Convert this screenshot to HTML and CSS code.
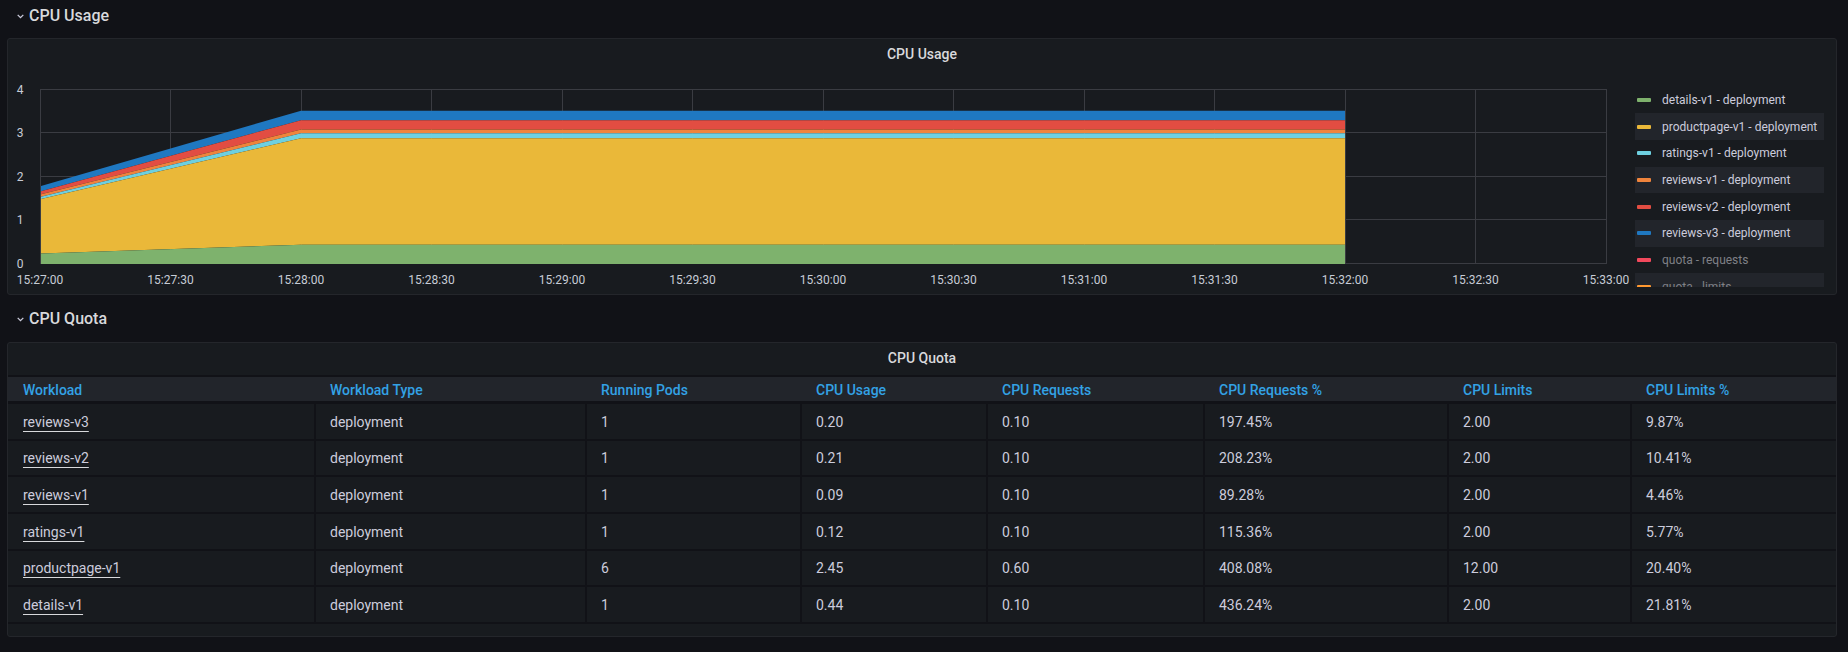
FILE: index.html
```html
<!DOCTYPE html>
<html>
<head>
<meta charset="utf-8">
<link rel="stylesheet" href="styles.css">
</head>
<body>
<div class="dash">
  <div class="row-title">
    <svg class="chev" width="7" height="5" viewBox="0 0 7 5"><path d="M0.7 0.9 L3.5 3.7 L6.3 0.9" fill="none" stroke="#ccccdc" stroke-width="1.3"/></svg>
    <span>CPU Usage</span>
  </div>

  <section class="panel panel-graph">
    <div class="panel-title">CPU Usage</div>
    <div class="graph-body">
      <svg class="plot" width="1622" height="223" viewBox="8 71 1622 223">
        <g class="grid" stroke="#3a3c42" stroke-width="1" fill="none">
          <line x1="40" y1="89.5" x2="1606.5" y2="89.5"/>
          <line x1="40" y1="132.5" x2="1606.5" y2="132.5"/>
          <line x1="40" y1="176.5" x2="1606.5" y2="176.5"/>
          <line x1="40" y1="219.5" x2="1606.5" y2="219.5"/>
          <line x1="40" y1="263.5" x2="1606.5" y2="263.5"/>
          <line x1="40.5" y1="89" x2="40.5" y2="264"/>
          <line x1="170.5" y1="89" x2="170.5" y2="264"/>
          <line x1="301.5" y1="89" x2="301.5" y2="264"/>
          <line x1="431.5" y1="89" x2="431.5" y2="264"/>
          <line x1="562.5" y1="89" x2="562.5" y2="264"/>
          <line x1="692.5" y1="89" x2="692.5" y2="264"/>
          <line x1="823.5" y1="89" x2="823.5" y2="264"/>
          <line x1="953.5" y1="89" x2="953.5" y2="264"/>
          <line x1="1084.5" y1="89" x2="1084.5" y2="264"/>
          <line x1="1214.5" y1="89" x2="1214.5" y2="264"/>
          <line x1="1345.5" y1="89" x2="1345.5" y2="264"/>
          <line x1="1475.5" y1="89" x2="1475.5" y2="264"/>
          <line x1="1606.5" y1="89" x2="1606.5" y2="264"/>
        </g>
        <g class="areas">
          <polygon fill="#1f78c1" points="41,186 301,110.7 1345,110.7 1345,120.3 301,120.3 41,191.2"/>
          <polygon fill="#e24d42" points="41,191.2 301,120.3 1345,120.3 1345,129.5 301,129.5 41,194.3"/>
          <polygon fill="#ef843c" points="41,194.3 301,129.5 1345,129.5 1345,133.3 301,133.3 41,196.8"/>
          <polygon fill="#6ed0e0" points="41,196.8 301,133.3 1345,133.3 1345,138.3 301,138.3 41,199.1"/>
          <polygon fill="#eab839" points="41,199.1 301,138.3 1345,138.3 1345,244.7 301,244.7 41,253.4"/>
          <polygon fill="#7eb26d" points="41,253.4 301,244.7 1345,244.7 1345,264 41,264"/>
        </g>
        <g class="ylab" text-anchor="end">
          <text x="23.5" y="93.5">4</text>
          <text x="23.5" y="137">3</text>
          <text x="23.5" y="180.5">2</text>
          <text x="23.5" y="224">1</text>
          <text x="23.5" y="267.5">0</text>
        </g>
        <g class="xlab" text-anchor="middle">
          <text x="40" y="283.5">15:27:00</text>
          <text x="170.5" y="283.5">15:27:30</text>
          <text x="301" y="283.5">15:28:00</text>
          <text x="431.5" y="283.5">15:28:30</text>
          <text x="562" y="283.5">15:29:00</text>
          <text x="692.5" y="283.5">15:29:30</text>
          <text x="823" y="283.5">15:30:00</text>
          <text x="953.5" y="283.5">15:30:30</text>
          <text x="1084" y="283.5">15:31:00</text>
          <text x="1214.5" y="283.5">15:31:30</text>
          <text x="1345" y="283.5">15:32:00</text>
          <text x="1475.5" y="283.5">15:32:30</text>
          <text x="1606" y="283.5">15:33:00</text>
        </g>
      </svg>
      <div class="legend">
        <div class="legend-item"><i class="sw c-green"></i><span>details-v1 - deployment</span></div>
        <div class="legend-item alt"><i class="sw c-yellow"></i><span>productpage-v1 - deployment</span></div>
        <div class="legend-item"><i class="sw c-cyan"></i><span>ratings-v1 - deployment</span></div>
        <div class="legend-item alt"><i class="sw c-orange"></i><span>reviews-v1 - deployment</span></div>
        <div class="legend-item"><i class="sw c-red"></i><span>reviews-v2 - deployment</span></div>
        <div class="legend-item alt"><i class="sw c-blue"></i><span>reviews-v3 - deployment</span></div>
        <div class="legend-item hidden"><i class="sw c-qreq"></i><span>quota - requests</span></div>
        <div class="legend-item alt hidden"><i class="sw c-qlim"></i><span>quota - limits</span></div>
      </div>
    </div>
  </section>

  <div class="row-title row-title-2">
    <svg class="chev" width="7" height="5" viewBox="0 0 7 5"><path d="M0.7 0.9 L3.5 3.7 L6.3 0.9" fill="none" stroke="#ccccdc" stroke-width="1.3"/></svg>
    <span>CPU Quota</span>
  </div>

  <section class="panel panel-table">
    <div class="panel-title">CPU Quota</div>
    <div class="table">
      <div class="thead">
        <div class="th">Workload</div>
        <div class="th">Workload Type</div>
        <div class="th">Running Pods</div>
        <div class="th">CPU Usage</div>
        <div class="th">CPU Requests</div>
        <div class="th">CPU Requests %</div>
        <div class="th">CPU Limits</div>
        <div class="th">CPU Limits %</div>
      </div>
      <div class="tr">
        <div class="td"><a class="link">reviews-v3</a></div><div class="td">deployment</div><div class="td">1</div><div class="td">0.20</div><div class="td">0.10</div><div class="td">197.45%</div><div class="td">2.00</div><div class="td">9.87%</div>
      </div>
      <div class="tr">
        <div class="td"><a class="link">reviews-v2</a></div><div class="td">deployment</div><div class="td">1</div><div class="td">0.21</div><div class="td">0.10</div><div class="td">208.23%</div><div class="td">2.00</div><div class="td">10.41%</div>
      </div>
      <div class="tr">
        <div class="td"><a class="link">reviews-v1</a></div><div class="td">deployment</div><div class="td">1</div><div class="td">0.09</div><div class="td">0.10</div><div class="td">89.28%</div><div class="td">2.00</div><div class="td">4.46%</div>
      </div>
      <div class="tr">
        <div class="td"><a class="link">ratings-v1</a></div><div class="td">deployment</div><div class="td">1</div><div class="td">0.12</div><div class="td">0.10</div><div class="td">115.36%</div><div class="td">2.00</div><div class="td">5.77%</div>
      </div>
      <div class="tr">
        <div class="td"><a class="link">productpage-v1</a></div><div class="td">deployment</div><div class="td">6</div><div class="td">2.45</div><div class="td">0.60</div><div class="td">408.08%</div><div class="td">12.00</div><div class="td">20.40%</div>
      </div>
      <div class="tr">
        <div class="td"><a class="link">details-v1</a></div><div class="td">deployment</div><div class="td">1</div><div class="td">0.44</div><div class="td">0.10</div><div class="td">436.24%</div><div class="td">2.00</div><div class="td">21.81%</div>
      </div>
    </div>
  </section>
</div>
</body>
</html>
```

FILE: styles.css
```css
* { box-sizing: border-box; }

html, body {
  margin: 0;
  padding: 0;
  background: #111217;
  color: #ccccdc;
  font-family: Roboto, "Liberation Sans", sans-serif;
  overflow: hidden;
}

.dash {
  width: 1848px;
  height: 652px;
  padding-left: 7px;
}

.row-title {
  height: 30px;
  margin-bottom: 8px;
  display: flex;
  align-items: center;
  padding-left: 10px;
  font-size: 16px;
  font-weight: 500;
  color: #d8d9dc;
}

.row-title .chev {
  margin-right: 5px;
  margin-top: 2px;
}

.row-title-2 {
  height: 31px;
  margin-bottom: 8px;
}

.panel {
  width: 1830px;
  background: #181b1f;
  border: 1px solid #24262b;
  border-radius: 3px;
}

.panel-graph {
  height: 257px;
  margin-bottom: 8px;
}

.panel-title {
  height: 32px;
  line-height: 31px;
  text-align: center;
  font-size: 14px;
  font-weight: 500;
  color: #d8d9dc;
}

.graph-body {
  display: flex;
  height: 223px;
}

.plot {
  display: block;
  flex: none;
}

.plot text {
  font-family: Roboto, "Liberation Sans", sans-serif;
  font-size: 12px;
  fill: #c7ccd6;
}

.legend {
  margin-left: 5px;
  margin-top: 15.67px;
  width: 189px;
  height: 200px;
  overflow: hidden;
  font-size: 12px;
}

.legend-item {
  height: 26.667px;
  display: flex;
  align-items: center;
  padding-left: 2px;
  white-space: nowrap;
  color: #ccccdc;
}

.legend-item.alt { background: #22252b; }
.legend-item.hidden span { color: #7f8086; }

.sw {
  display: block;
  width: 14px;
  height: 4px;
  margin-right: 11px;
  border-radius: 1px;
}

.c-green { background: #7eb26d; }
.c-yellow { background: #eab839; }
.c-cyan { background: #6ed0e0; }
.c-orange { background: #ef843c; }
.c-red { background: #e24d42; }
.c-blue { background: #1f78c1; }
.c-qreq { background: #f2495c; }
.c-qlim { background: #ff9830; }

.panel-table {
  height: 295px;
}

.table {
  font-size: 14px;
}

.thead, .tr {
  display: grid;
  grid-template-columns: 306px 271px 215px 186px 217px 244px 183px 206px;
}

.thead {
  height: 29px;
  border-top: 2px solid #111217;
  border-bottom: 3px solid #111217;
  background: #22252b;
}

.th {
  display: flex;
  align-items: center;
  padding-left: 16px;
  padding-top: 1px;
  font-weight: 500;
  color: #33a2e5;
  white-space: nowrap;
}

.th:first-child { padding-left: 15px; }

.tr {
  height: 36.667px;
  border-bottom: 2px solid #111217;
}

.td {
  display: flex;
  align-items: center;
  padding-left: 14px;
  padding-top: 1px;
  border-left: 2px solid #111217;
  color: #ccccdc;
  white-space: nowrap;
}

.td:first-child {
  border-left: none;
  padding-left: 15px;
}

.link {
  color: #ccccdc;
  text-decoration: underline;
  text-decoration-thickness: 1px;
  text-underline-offset: 4px;
  text-decoration-color: #d8d9dc;
}
```
